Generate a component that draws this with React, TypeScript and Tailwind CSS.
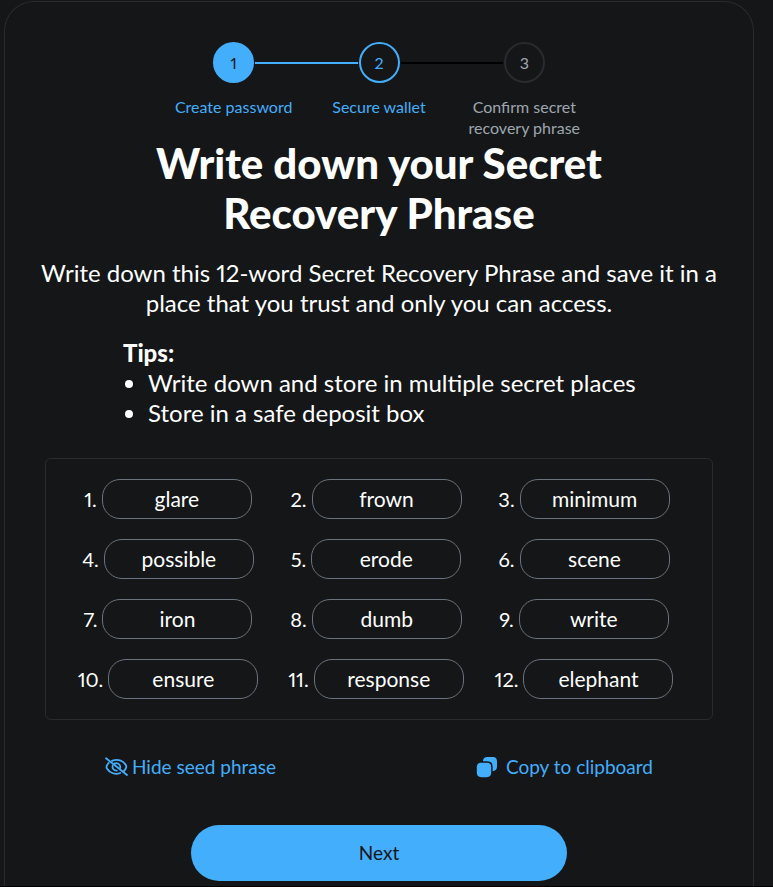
import React from "react";

type StepState = "done" | "current" | "pending";

const steps: { label: string; state: StepState }[] = [
  { label: "Create password", state: "done" },
  { label: "Secure wallet", state: "current" },
  { label: "Confirm secret recovery phrase", state: "pending" },
];

const circleStyles: Record<StepState, string> = {
  done: "border-[#43aefc] bg-[#43aefc] text-[#141618]",
  current: "border-[#43aefc] text-[#43aefc]",
  pending: "border-[#292b2d] text-[#9fa6ae]",
};

const labelStyles: Record<StepState, string> = {
  done: "text-[#43aefc]",
  current: "text-[#43aefc]",
  pending: "text-[#9fa6ae]",
};

const words = [
  "glare", "frown", "minimum",
  "possible", "erode", "scene",
  "iron", "dumb", "write",
  "ensure", "response", "elephant",
];

function lineStyle(index: number, side: "left" | "right") {
  if (side === "left") {
    if (index === 0) return "bg-transparent";
    return index === 1 ? "bg-[#43aefc]" : "bg-black";
  }
  if (index === steps.length - 1) return "bg-transparent";
  return index === 0 ? "bg-[#43aefc]" : "bg-black";
}

function Stepper() {
  return (
    <ol className="mx-auto grid w-full max-w-[436px] grid-cols-3 text-base leading-[21px]">
      {steps.map((step, i) => (
        <li key={step.label} className="flex flex-col items-center">
          <div className="flex w-full items-center gap-px">
            <span className={`h-0.5 flex-1 ${lineStyle(i, "left")}`} />
            <span
              className={`flex size-[41px] items-center justify-center rounded-full border-2 ${circleStyles[step.state]}`}
            >
              {i + 1}
            </span>
            <span className={`h-0.5 flex-1 ${lineStyle(i, "right")}`} />
          </div>
          <span className={`mt-[13px] px-3 text-center ${labelStyles[step.state]}`}>{step.label}</span>
        </li>
      ))}
    </ol>
  );
}

function EyeSlashIcon() {
  return (
    <svg viewBox="0 0 24 20" className="h-5 w-6" fill="none" stroke="currentColor" strokeWidth="1.8" strokeLinecap="round" aria-hidden="true">
      <path d="M1 1.2 L22 18" />
      <path d="M7 3.8 C12.5 1.6 18 3.3 20.8 8 Q21.8 9.8 20.8 11.5 Q20 13 18.9 14" />
      <path d="M3.8 5.9 Q2.7 7 1.9 8.4 Q1.1 10 1.9 11.5 C4.8 16.3 10.6 17.9 15.2 16" />
      <path d="M9.4 6.6 C12.1 5.4 15.3 7.1 15.3 10.1 Q15.3 10.8 15.1 11.2" />
      <path d="M7.6 8.6 C6.9 11.4 9 13.8 11.8 13.6" />
    </svg>
  );
}

function CopyIcon() {
  return (
    <svg viewBox="0 0 22 22" className="size-[22px]" fill="currentColor" aria-hidden="true">
      <path d="M16.2 1 H11.4 C8.6 1 7.2 2.2 6.9 5.3 H11 C15 5.3 16.6 7 16.6 11 V15.2 C19.7 14.9 21 13.5 21 10.6 V5.8 C21 2.4 19.6 1 16.2 1 Z" />
      <path d="M10.6 6.7 H5.4 C2.2 6.7 0.8 8.1 0.8 11.3 V16.6 C0.8 19.8 2.2 21.2 5.4 21.2 H10.6 C13.8 21.2 15.2 19.8 15.2 16.6 V11.3 C15.2 8.1 13.8 6.7 10.6 6.7 Z" />
    </svg>
  );
}

export default function App() {
  return (
    <main className="flex min-h-screen flex-col border-b border-black bg-[#141618] pt-px pr-[19px] pl-1 font-['Lato',sans-serif] text-[24px] leading-[30px] text-white proportional-nums">
      <section className="flex-1 rounded-t-[30px] border border-b-0 border-[#292b2d] px-10 pt-10 pb-[5px]">
        <Stepper />
        <h1 className="px-[72px] text-center text-[42px] leading-[50px] font-black">
          Write down your Secret Recovery Phrase
        </h1>
        <p className="-mx-2 mt-5 text-center">
          Write down this 12-word Secret Recovery Phrase and save it in a place that you trust and only you can access.
        </p>
        <div className="mt-5 pl-[78px]">
          <h2 className="font-black">Tips:</h2>
          <ul className="list-disc pl-[25px]">
            <li>Write down and store in multiple secret places</li>
            <li>Store in a safe deposit box</li>
          </ul>
        </div>

        <ol className="mt-[30px] grid grid-cols-3 gap-y-5 rounded-md border border-[#292b2d] py-5 pr-6 pl-[18px] text-[21px]">
          {words.map((word, i) => (
            <li key={word} className="flex items-center justify-center gap-[5px]">
              <span className="text-[20px]">{i + 1}.</span>
              <span className="flex h-10 w-[150px] items-center justify-center rounded-[18px] border border-[#6a737d]">
                {word}
              </span>
            </li>
          ))}
        </ol>

        <div className="mt-8 flex justify-between px-[60px] text-[19px] text-[#43aefc]">
          <button type="button" className="flex items-center gap-[3px]">
            <EyeSlashIcon />
            Hide seed phrase
          </button>
          <button type="button" className="flex items-center gap-2">
            <CopyIcon />
            Copy to clipboard
          </button>
        </div>

        <button
          type="button"
          className="mx-auto mt-[43px] block h-14 w-full max-w-[376px] rounded-full bg-[#43aefc] text-[19px] text-[#141618]"
        >
          Next
        </button>
      </section>
    </main>
  );
}
